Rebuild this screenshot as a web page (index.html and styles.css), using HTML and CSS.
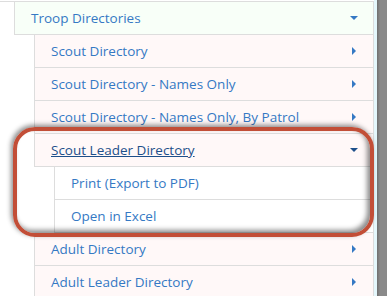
FILE: index.html
```html
<!DOCTYPE html>
<html lang="en">
<head>
  <meta charset="UTF-8" />
  <meta name="viewport" content="width=device-width, initial-scale=1.0" />
  <title>Troop Directories</title>
  <link rel="stylesheet" href="styles.css">
</head>
<body>
  <div class="page">
    <div class="menu">
      <div class="top-line"></div>
      <div class="item level1 open"><span>Troop Directories</span><i class="caret down"></i></div>
      <div class="item level2"><span>Scout Directory</span><i class="caret right"></i></div>
      <div class="item level2"><span>Scout Directory - Names Only</span><i class="caret right"></i></div>
      <div class="item level2"><span>Scout Directory - Names Only, By Patrol</span><i class="caret right"></i></div>
      <div class="item level2 active"><span>Scout Leader Directory</span><i class="caret down"></i></div>
      <div class="item level3"><span>Print (Export to PDF)</span></div>
      <div class="item level3"><span>Open in Excel</span></div>
      <div class="item level2"><span>Adult Directory</span><i class="caret right"></i></div>
      <div class="item level2"><span>Adult Leader Directory</span><i class="caret right"></i></div>
      <div class="highlight"></div>
    </div>
    <div class="edge"></div>
    <div class="scrollbar"></div>
  </div>
</body>
</html>
```

FILE: styles.css
```css
body {
  margin: 0;
  font-family: "Open Sans", sans-serif;
  font-size: 13.5px;
  background-color: #fff;
}
.page {
  display: flex;
  height: 296px;
  overflow: hidden;
}
.menu {
  position: relative;
  width: 374px;
}
.top-line {
  height: 1px;
  border-bottom: 1px solid #ddd;
}
.item {
  display: flex;
  align-items: center;
  justify-content: space-between;
  height: 32px;
  padding: 0 15px 0 16px;
  border: 1px solid #ddd;
  border-top: none;
  color: #3579c4;
  box-sizing: content-box;
}
.level1 {
  margin-left: 14px;
  background-color: #f8fff8;
}
.level2 {
  margin-left: 34px;
  background-color: #fff8f8;
}
.level3 {
  margin-left: 54px;
  background-color: #fff;
}
.active span {
  color: #1d4f8a;
  text-decoration: underline;
}
.caret {
  width: 0;
  height: 0;
}
.caret.down {
  border-left: 4px solid transparent;
  border-right: 4px solid transparent;
  border-top: 4px solid #3579c4;
}
.caret.right {
  border-top: 4px solid transparent;
  border-bottom: 4px solid transparent;
  border-left: 4px solid #3579c4;
  margin-right: 2px;
}
.active .caret.down {
  border-top-color: #1d4f8a;
}
.highlight {
  position: absolute;
  left: 13px;
  top: 127px;
  width: 353px;
  height: 102px;
  border: 4px solid #c24e37;
  border-radius: 22px;
  box-shadow: -2px -2px 5px rgba(0, 0, 0, 0.45), inset -3px -3px 5px rgba(0, 0, 0, 0.45);
}
.edge {
  width: 3px;
  background-color: #e4f7fc;
}
.scrollbar {
  width: 10px;
  background: linear-gradient(to right, #6f6f6f, #8a8a8a 30%, #8a8a8a);
}
```
